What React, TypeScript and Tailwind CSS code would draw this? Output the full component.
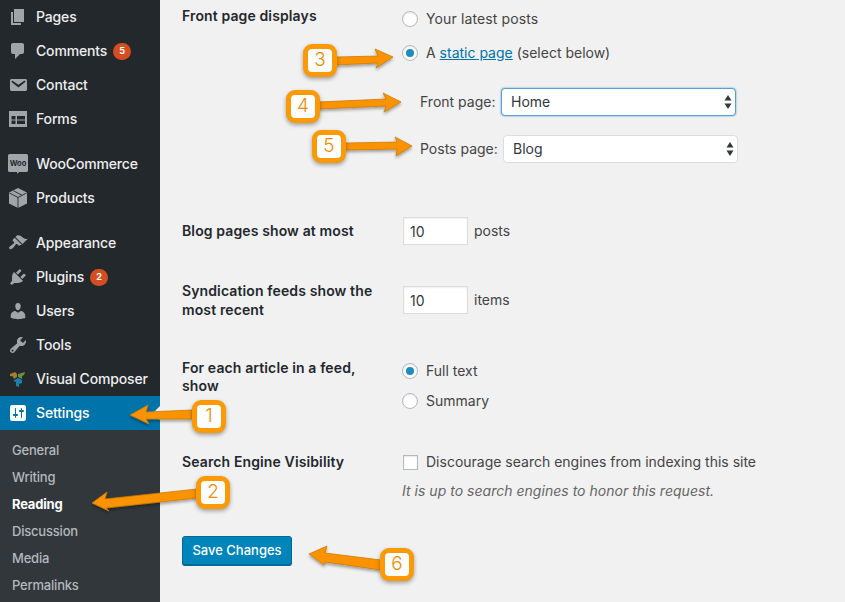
import type { ReactNode } from "react";

const ui = "[font-family:Inter,'Liberation_Sans',sans-serif]";

function Dash({ d, className = "text-[#a0a5aa]" }: { d: string; className?: string }) {
  return (
    <svg viewBox="0 0 20 20" className={`h-5 w-5 ${className}`} fill="currentColor">
      <path d={d} />
    </svg>
  );
}

const icons = {
  pages: <Dash d="M6 15V2h10v13H6zm-1 1h8v2H3V5h2v11z" />,
  comments: <Dash d="M5 2h9c1.1 0 2 .9 2 2v7c0 1.1-.9 2-2 2h-2l-5 5v-5H5c-1.1 0-2-.9-2-2V4c0-1.1.9-2 2-2z" />,
  contact: (
    <Dash d="M3.87 4h13.25C18.37 4 19 4.59 19 5.79v8.42c0 1.19-.63 1.79-1.88 1.79H3.87c-1.25 0-1.88-.6-1.88-1.79V5.79c0-1.2.63-1.79 1.88-1.79zm6.62 8.6l6.74-5.53c.24-.2.43-.66.13-1.07-.29-.41-.82-.42-1.17-.17l-5.7 3.86L4.8 6c-.35-.25-.88-.24-1.17.17-.3.41-.11.87.13 1.07z" />
  ),
  forms: (
    <svg viewBox="0 0 20 20" className="h-5 w-5 text-[#a0a5aa]" fill="currentColor">
      <path
        fillRule="evenodd"
        d="M1 2h18v16H1V2zm2.500 5v3.500h4V7h-4zm5.500 0v3.500h8V7H9zm-5.500 4.500V15h4v-3.500h-4zm5.500 0V15h8v-3.500H9z"
      />
    </svg>
  ),
  woo: (
    <svg viewBox="0 0 22 22" className="h-[22px] w-[22px] text-[#a0a5aa]" fill="currentColor">
      <path d="M2.500 1h17A1.500 1.500 0 0 1 21 2.500v15a1.500 1.500 0 0 1-1.500 1.500H12L10.500 21 10 19H2.500A1.500 1.500 0 0 1 1 17.500v-15A1.500 1.500 0 0 1 2.500 1z" />
      <text x="11" y="12.500" textAnchor="middle" fontSize="7.500" fontWeight="700" fill="#23282d" fontFamily="Inter, sans-serif">
        Woo
      </text>
    </svg>
  ),
  products: (
    <svg viewBox="0 0 20 20" className="h-5 w-5 text-[#a0a5aa]" fill="currentColor">
      <path d="M10 0l9 4.500v11L10 20l-9-4.500v-11z" />
      <path d="M1.500 5L10 9.500 18.500 5M5.500 2.800L14 7.300M10 9.500V20" fill="none" stroke="#23282d" strokeWidth="0.9" />
    </svg>
  ),
  appearance: (
    <Dash d="M14.48 11.06L7.41 3.99l1.5-1.5c.5-.56 2.3-.47 3.51.32 1.21.8 1.43 1.28 2.91 2.1 1.18.64 2.45 1.26 4.45.85zm-.71.71L6.7 4.7 4.93 6.47c-.39.39-.39 1.02 0 1.41l1.06 1.06c.39.39.39 1.03 0 1.42-.6.6-1.43 1.11-2.21 1.69-.35.26-.7.53-1.01.84C1.43 13.23.4 14.79 1.44 15.83c1.04 1.04 2.6.01 3.94-1.33.31-.31.58-.66.84-1.01.58-.78 1.09-1.61 1.69-2.21.39-.39 1.03-.39 1.42 0l1.06 1.06c.39.39 1.02.39 1.41 0z" />
  ),
  plugins: (
    <Dash d="M13.11 4.36L9.87 7.6 8 5.73l3.24-3.24c.35-.34 1.05-.2 1.56.32.52.51.66 1.21.31 1.55zm-8 1.77l.91-1.12 9.01 9.01-1.19.84c-.71.71-2.63 1.16-3.82 1.16H6.14L4.9 17.26c-.59.59-1.54.59-2.12 0-.59-.58-.59-1.53 0-2.12l1.24-1.24v-3.88c0-1.13.4-3.19 1.09-3.89zm7.26 3.97l3.24-3.24c.34-.35 1.04-.2 1.55.31.52.52.66 1.22.32 1.56l-3.24 3.24z" />
  ),
  users: (
    <Dash d="M10 9.250c-2.270 0-2.730-3.440-2.730-3.440C7 4.020 7.820 2 9.970 2c2.160 0 2.980 2.020 2.710 3.810 0 0-.410 3.440-2.680 3.440zm0 2.570L12.720 10c2.390 0 4.520 2.330 4.520 4.530v2.490s-3.650 1.130-7.240 1.130c-3.650 0-7.240-1.130-7.240-1.130v-2.490c0-2.250 1.940-4.480 4.470-4.480z" />
  ),
  tools: (
    <Dash d="M16.68 9.770c-1.340 1.340-3.300 1.670-4.950.990l-5.410 6.520c-.990.990-2.590.990-3.580 0s-.990-2.590 0-3.570l6.520-5.420c-.680-1.650-.350-3.610.990-4.950 1.280-1.280 3.120-1.620 4.720-1.060l-2.890 2.890 2.820 2.820 2.860-2.870c.530 1.580.180 3.390-1.080 4.650zM3.810 16.210c.4.390 1.040.390 1.430 0 .4-.4.4-1.040 0-1.430-.390-.4-1.030-.4-1.430 0-.390.390-.390 1.030 0 1.430z" />
  ),
  composer: (
    <svg viewBox="0 0 20 20" className="h-5 w-5">
      <path d="M2 5l5-2 2 2v3L6 10 5 7.500 2 7z" fill="#a08030" />
      <path d="M10 5l7-2-1 3-2 1v3l-4-2z" fill="#6a9038" />
      <path d="M5 12l5-3 4 2v3l-3 1v3l-3-1v-4z" fill="#1b80ad" />
    </svg>
  ),
  settings: (
    <Dash
      className="text-white"
      d="M18 16V4c0-1.100-.9-2-2-2H4c-1.100 0-2 .9-2 2v12c0 1.100.9 2 2 2h12c1.100 0 2-.9 2-2zM8 11h1c.550 0 1 .450 1 1s-.450 1-1 1H8v1.500c0 .280-.220.500-.500.500s-.500-.220-.500-.500V13H6c-.550 0-1-.450-1-1s.450-1 1-1h1V5.500c0-.280.220-.500.500-.500s.500.220.500.500V11zm5-2h-1c-.550 0-1-.450-1-1s.450-1 1-1h1V5.500c0-.280.220-.500.500-.500s.500.220.500.500V7h1c.550 0 1 .450 1 1s-.450 1-1 1h-1v5.500c0 .280-.220.500-.500.500s-.500-.220-.500-.500V9z"
    />
  ),
};

function MenuItem({ icon, label, count, active }: { icon: ReactNode; label: string; count?: number; active?: boolean }) {
  return (
    <div className={`relative flex h-[34px] items-center ${active ? "bg-[#0073aa] text-white" : "text-[#eee]"}`}>
      <span className="flex w-9 shrink-0 justify-center">{icon}</span>
      <span className="text-sm font-medium tracking-[-0.15px]">{label}</span>
      {count !== undefined && (
        <span className="ml-[6px] flex h-[17px] w-[18px] items-center justify-center rounded-full bg-[#d54e21] text-[9px] font-bold text-white">
          {count}
        </span>
      )}
      {active && (
        <span className="absolute right-0 top-[10px] border-y-[7px] border-r-[7px] border-y-transparent border-r-[#f1f1f1]" />
      )}
    </div>
  );
}

function Sidebar() {
  return (
    <aside className="h-full w-[160px] shrink-0 bg-[#23282d]">
      <MenuItem icon={icons.pages} label="Pages" />
      <MenuItem icon={icons.comments} label="Comments" count={5} />
      <MenuItem icon={icons.contact} label="Contact" />
      <MenuItem icon={icons.forms} label="Forms" />
      <div className="mt-[11px]">
        <MenuItem icon={icons.woo} label="WooCommerce" />
        <MenuItem icon={icons.products} label="Products" />
      </div>
      <div className="mt-[11px]">
        <MenuItem icon={icons.appearance} label="Appearance" />
        <MenuItem icon={icons.plugins} label="Plugins" count={2} />
        <MenuItem icon={icons.users} label="Users" />
        <MenuItem icon={icons.tools} label="Tools" />
        <MenuItem icon={icons.composer} label="Visual Composer" />
        <MenuItem icon={icons.settings} label="Settings" active />
      </div>
      <div className="h-[172px] bg-[#32373c] pl-3 pt-[7px] text-[13px] font-medium tracking-[-0.2px] text-[#b4b9be]">
        {["General", "Writing", "Reading", "Discussion", "Media", "Permalinks"].map((s) => (
          <div key={s} className={`flex h-[27px] items-center ${s === "Reading" ? "font-bold text-white" : ""}`}>
            {s}
          </div>
        ))}
      </div>
    </aside>
  );
}

function Radio({ checked, label }: { checked?: boolean; label: ReactNode }) {
  return (
    <div className="flex h-5 items-center">
      <span className="flex h-4 w-4 shrink-0 items-center justify-center rounded-full border border-[#b4b9be] bg-white shadow-[inset_0_1px_2px_rgba(0,0,0,0.1)]">
        {checked && <span className="h-2 w-2 rounded-full bg-[#1e8cbe]" />}
      </span>
      <span className="ml-2 text-sm text-[#444]">{label}</span>
    </div>
  );
}

function PageSelect({ value, focused }: { value: string; focused?: boolean }) {
  return (
    <div className="relative w-[235px]">
      <select
        defaultValue={value}
        className={`h-7 w-full appearance-none rounded bg-white pl-[9px] text-sm text-[#32373c] outline-none ${
          focused ? "border border-[#5b9dd9] shadow-[0_0_2px_rgba(30,140,190,0.8)]" : "border border-[#ddd]"
        }`}
      >
        <option>{value}</option>
      </select>
      <svg viewBox="0 0 8 14" className="pointer-events-none absolute right-[4px] top-[7px] h-[14px] w-2 text-[#32373c]" fill="currentColor">
        <path d="M4 0l3.500 5.500h-7zM4 14L.5 8.500h7z" />
      </svg>
    </div>
  );
}

function NumberBox() {
  return (
    <input
      defaultValue="10"
      className="h-7 w-[65px] border border-[#ddd] bg-white pl-[6px] text-sm text-[#32373c] shadow-[inset_0_1px_2px_rgba(0,0,0,0.07)] outline-none"
    />
  );
}

function Row({ label, className, children }: { label: ReactNode; className: string; children: ReactNode }) {
  return (
    <div className={`flex ${className}`}>
      <div className="w-[220px] shrink-0 pr-4 text-sm font-semibold leading-[19px] tracking-[0.12px] text-[#23282d]">{label}</div>
      <div>{children}</div>
    </div>
  );
}

function SettingsForm() {
  return (
    <main className="min-w-0 flex-1 pl-[22px]">
      <Row label="Front page displays" className="pt-[6px]">
        <div className="pt-[3px]">
          <Radio label={<span className="tracking-[0.12px]">Your latest posts</span>} />
          <div className="mt-[14px]">
            <Radio
              checked
              label={
                <>
                  A <span className="text-[#0073aa] underline">static page</span> (select below)
                </>
              }
            />
          </div>
          <div className="ml-[18px] mt-[25px] flex items-center">
            <span className="w-[81px] shrink-0 text-sm text-[#444]">Front page:</span>
            <PageSelect value="Home" focused />
          </div>
          <div className="ml-[18px] mt-[19px] flex items-center">
            <span className="w-[83px] shrink-0 text-sm text-[#444]">Posts page:</span>
            <PageSelect value="Blog" />
          </div>
        </div>
      </Row>

      <Row label={<span className="block pt-1">Blog pages show at most</span>} className="mt-[54px]">
        <div className="flex items-center pl-px">
          <NumberBox />
          <span className="ml-[6px] text-sm text-[#444]">posts</span>
        </div>
      </Row>

      <Row
        label={
          <>
            Syndication feeds show the
            <br />
            most recent
          </>
        }
        className="mt-9"
      >
        <div className="flex items-center pl-px pt-[5px]">
          <NumberBox />
          <span className="ml-[6px] text-sm text-[#444]">items</span>
        </div>
      </Row>

      <Row
        label={
          <span className="block pt-px leading-[18px]">
            For each article in a feed,
            <br />
            show
          </span>
        }
        className="mt-[39px]"
      >
        <div className="pt-[3px]">
          <Radio checked label="Full text" />
          <div className="mt-[10px]">
            <Radio label="Summary" />
          </div>
        </div>
      </Row>

      <Row label="Search Engine Visibility" className="mt-[41px]">
        <div className="flex h-5 items-center pl-px">
          <span className="h-[15px] w-[15px] shrink-0 border border-[#b4b9be] bg-white shadow-[inset_0_1px_2px_rgba(0,0,0,0.1)]" />
          <span className="ml-2 text-sm text-[#444]">Discourage search engines from indexing this site</span>
        </div>
        <p className="mt-[9px] h-5 text-sm italic leading-5 tracking-[0.02px] text-[#666]">It is up to search engines to honor this request.</p>
      </Row>

      <button className="mt-[35px] h-[29px] w-[110px] rounded-[3px] border border-[#006799] bg-[#0085ba] text-[13px] font-medium text-white shadow-[0_1px_0_#006799]">
        Save Changes
      </button>
    </main>
  );
}

const arrows = [
  "130,415 148,405 146,412 192,410 192,419 146,419 149,424",
  "92,503 107,492 105,499 197,489 197,498 106,508 109,511",
  "393,57 375,49 378,56 336,57 336,65 378,63 376,68",
  "401,102 383,93 386,99 318,102 318,109 386,106 384,112",
  "412,146 395,137 397,142 345,143 345,150 397,149 396,156",
  "309,554 327,546 325,553 381,560 381,570 325,562 324,565",
];

const callouts = [
  { n: 1, pos: "left-[192px] top-[400px]" },
  { n: 2, pos: "left-[196px] top-[476px]" },
  { n: 3, pos: "left-[303px] top-[44px]" },
  { n: 4, pos: "left-[286px] top-[90px]" },
  { n: 5, pos: "left-[312px] top-[130px]" },
  { n: 6, pos: "left-[380px] top-[548px]" },
];

export default function App() {
  return (
    <div className={`relative flex h-[602px] w-[845px] overflow-hidden bg-[#f1f1f1] ${ui}`}>
      <Sidebar />
      <SettingsForm />

      {/* annotation layer */}
      <svg viewBox="0 0 845 602" className="pointer-events-none absolute inset-0 h-[602px] w-[845px]">
        <defs>
          <filter id="arrowShadow" x="-20%" y="-50%" width="140%" height="220%">
            <feDropShadow dx="0" dy="2" stdDeviation="1.500" floodColor="#000" floodOpacity="0.35" />
          </filter>
        </defs>
        {arrows.map((points) => (
          <polygon
            key={points}
            points={points}
            fill="#fb9300"
            stroke="#c97a0a"
            strokeWidth="0.75"
            strokeLinejoin="round"
            filter="url(#arrowShadow)"
          />
        ))}
      </svg>
      {callouts.map((c) => (
        <div
          key={c.n}
          className={`absolute ${c.pos} flex h-[33px] w-[34px] items-center justify-center rounded-[9px] border-[5px] border-[#fb9a06] bg-white text-[19px] font-light text-[#f08c00] shadow-[0_2px_4px_rgba(0,0,0,0.35)]`}
        >
          {c.n}
        </div>
      ))}
    </div>
  );
}
